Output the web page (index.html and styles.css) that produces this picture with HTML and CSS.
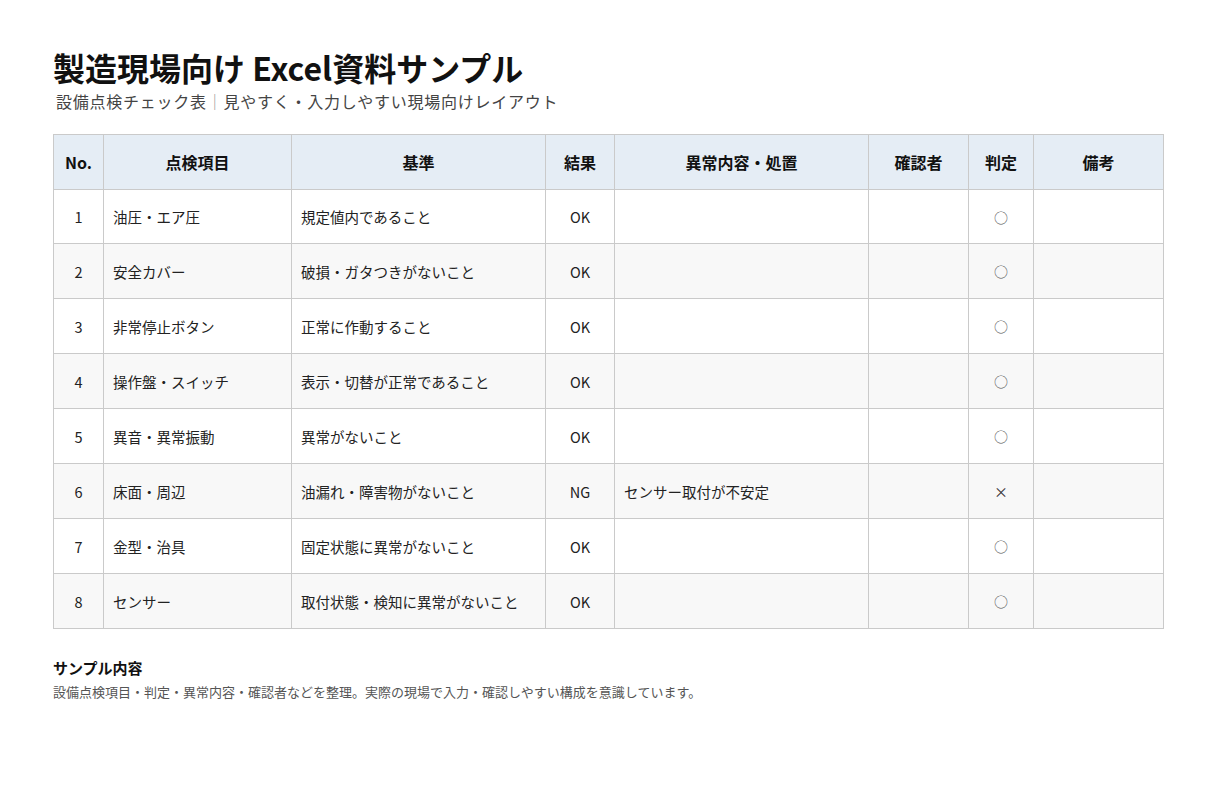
FILE: index.html
```html
<!DOCTYPE html>
<html lang="ja">
<head>
<meta charset="utf-8">
<link rel="stylesheet" href="styles.css">
</head>
<body>
<main class="page">
  <h1 class="title">製造現場向け Excel資料サンプル</h1>
  <p class="subtitle">設備点検チェック表<span class="sep">｜</span>見やすく・入力しやすい現場向けレイアウト</p>
  <table class="sheet">
    <colgroup>
      <col class="c-no"><col class="c-item"><col class="c-std"><col class="c-res"><col class="c-abn"><col class="c-chk"><col class="c-judge"><col class="c-note">
    </colgroup>
    <thead>
      <tr><th>No.</th><th>点検項目</th><th>基準</th><th>結果</th><th>異常内容・処置</th><th>確認者</th><th>判定</th><th>備考</th></tr>
    </thead>
    <tbody>
      <tr><td class="ctr">1</td><td>油圧・エア圧</td><td>規定値内であること</td><td class="ctr">OK</td><td></td><td></td><td class="ctr mark">○</td><td></td></tr>
      <tr><td class="ctr">2</td><td>安全カバー</td><td>破損・ガタつきがないこと</td><td class="ctr">OK</td><td></td><td></td><td class="ctr mark">○</td><td></td></tr>
      <tr><td class="ctr">3</td><td>非常停止ボタン</td><td>正常に作動すること</td><td class="ctr">OK</td><td></td><td></td><td class="ctr mark">○</td><td></td></tr>
      <tr><td class="ctr">4</td><td>操作盤・スイッチ</td><td>表示・切替が正常であること</td><td class="ctr">OK</td><td></td><td></td><td class="ctr mark">○</td><td></td></tr>
      <tr><td class="ctr">5</td><td>異音・異常振動</td><td>異常がないこと</td><td class="ctr">OK</td><td></td><td></td><td class="ctr mark">○</td><td></td></tr>
      <tr><td class="ctr">6</td><td>床面・周辺</td><td>油漏れ・障害物がないこと</td><td class="ctr">NG</td><td>センサー取付が不安定</td><td></td><td class="ctr mark cross">×</td><td></td></tr>
      <tr><td class="ctr">7</td><td>金型・治具</td><td>固定状態に異常がないこと</td><td class="ctr">OK</td><td></td><td></td><td class="ctr mark">○</td><td></td></tr>
      <tr><td class="ctr">8</td><td>センサー</td><td>取付状態・検知に異常がないこと</td><td class="ctr">OK</td><td></td><td></td><td class="ctr mark">○</td><td></td></tr>
    </tbody>
  </table>
  <section class="notes">
    <h2 class="notes-title">サンプル内容</h2>
    <p class="notes-text">設備点検項目・判定・異常内容・確認者などを整理。実際の現場で入力・確認しやすい構成を意識しています。</p>
  </section>
</main>
</body>
</html>
```

FILE: styles.css
```css
* { box-sizing: border-box; }
html, body { margin: 0; padding: 0; background: #ffffff; }
body {
  font-family: "Noto Sans CJK JP", "Noto Sans", sans-serif;
  color: #111;
}
.page {
  padding: 44px 57px 0 53px;
  width: 1220px;
}
.title {
  margin: 0;
  font-size: 32px;
  font-weight: 700;
  line-height: 46px;
  letter-spacing: 0;
  color: #111;
}
.subtitle {
  margin: 0 0 0 3px;
  font-size: 16px;
  line-height: 22px;
  color: #444;
  letter-spacing: 0.75px;
}
.subtitle .sep { color: #999; }
.sheet {
  margin-top: 22px;
  width: 1110px;
  border-collapse: collapse;
  table-layout: fixed;
  border: 1px solid #c4c4c4;
}
.c-no { width: 50px; }
.c-item { width: 188px; }
.c-std { width: 254px; }
.c-res { width: 69px; }
.c-abn { width: 254px; }
.c-chk { width: 100px; }
.c-judge { width: 65px; }
.c-note { width: 130px; }
.sheet th, .sheet td {
  border: 1px solid #cacaca;
  height: 55px;
  padding: 0 9px;
  font-size: 14.5px;
  color: #222;
  vertical-align: middle;
}
.sheet th {
  height: 55px;
  background: #e5edf5;
  font-weight: 700;
  font-size: 16px;
  text-align: center;
  color: #111;
}
.sheet tbody tr:first-child td { height: 54px; }
.sheet tbody tr:nth-child(even) td { background: #f8f8f8; }
.sheet td.ctr { text-align: center; }
.sheet td.mark { color: #555; font-size: 14px; }
.sheet td.cross { color: #333; }
.notes { margin-top: 28px; }
.notes-title {
  margin: 0;
  font-size: 15px;
  font-weight: 700;
  line-height: 22px;
  color: #111;
}
.notes-text {
  margin: 4px 0 0;
  font-size: 13px;
  line-height: 18px;
  color: #555;
  letter-spacing: 0;
}
```
